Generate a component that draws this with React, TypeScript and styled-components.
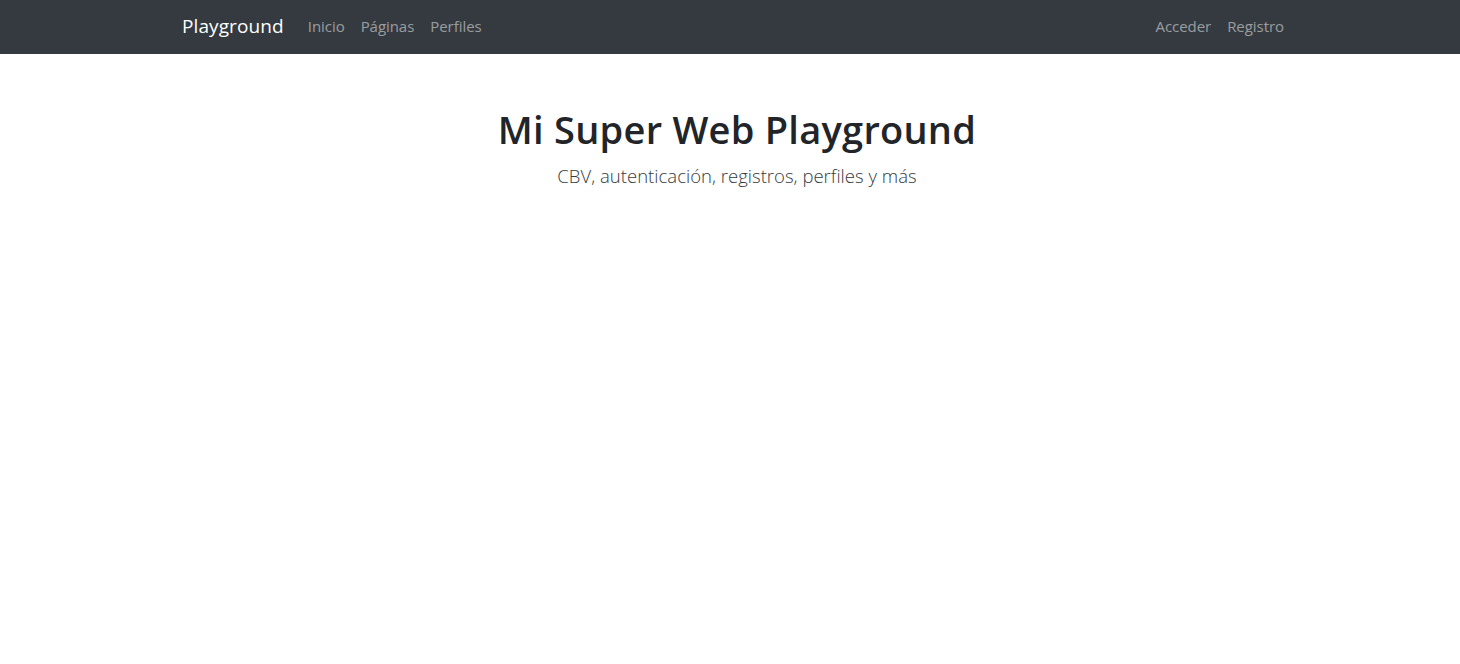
import React from "react";
import styled, { createGlobalStyle } from "styled-components";

const Global = createGlobalStyle`
  html, body { margin: 0; padding: 0; background: #fff; }
  body { font-family: "Open Sans", "Noto Sans", Arial, sans-serif; color: #212529; }
  * { box-sizing: border-box; }
`;

const NavBar = styled.nav`
  background: #343a40;
  height: 54px;
  display: flex;
  justify-content: center;
`;

const NavInner = styled.div`
  width: 1124px;
  display: flex;
  align-items: center;
  padding: 0 0 2px 14px;
`;

const Brand = styled.a`
  color: #fff;
  font-size: 19px;
  letter-spacing: 0.1px;
  margin-right: 16px;
  text-decoration: none;
  line-height: 30px;
`;

const NavList = styled.div<{ $end?: boolean }>`
  display: flex;
  margin-left: ${(p) => (p.$end ? "auto" : "0")};
`;

const NavLink = styled.a`
  color: rgba(255, 255, 255, 0.5);
  font-size: 15px;
  letter-spacing: -0.05px;
  padding: 8px;
  line-height: 24px;
  text-decoration: none;
`;

const Header = styled.header`
  text-align: center;
  padding: 51px 0 0 14px;
`;

const Title = styled.h1`
  margin: 0;
  font-size: 38px;
  font-weight: 600;
  letter-spacing: 0.25px;
  line-height: 48px;
  color: #212529;
`;

const Lead = styled.p`
  margin: 9px 0 0;
  font-size: 18.5px;
  font-weight: 300;
  letter-spacing: 0.02px;
  line-height: 28px;
  color: #343a40;
`;

export default function App() {
  return (
    <>
      <Global />
      <NavBar>
        <NavInner>
          <Brand href="#">Playground</Brand>
          <NavList>
            <NavLink href="#">Inicio</NavLink>
            <NavLink href="#">Páginas</NavLink>
            <NavLink href="#">Perfiles</NavLink>
          </NavList>
          <NavList $end>
            <NavLink href="#">Acceder</NavLink>
            <NavLink href="#">Registro</NavLink>
          </NavList>
        </NavInner>
      </NavBar>
      <Header>
        <Title>Mi Super Web Playground</Title>
        <Lead>CBV, autenticación, registros, perfiles y más</Lead>
      </Header>
    </>
  );
}
